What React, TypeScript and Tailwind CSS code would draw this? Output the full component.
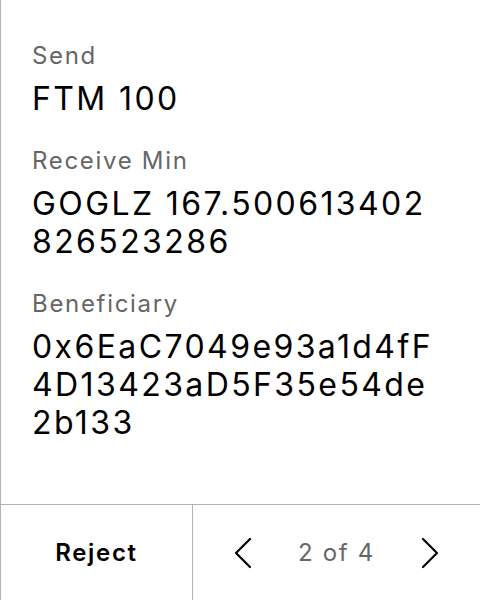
import React from "react";

const fields = [
  { label: "Send", value: "FTM 100" },
  { label: "Receive Min", value: "GOGLZ 167.500613402826523286" },
  { label: "Beneficiary", value: "0x6EaC7049e93a1d4fF4D13423aD5F35e54de2b133" },
];

function Chevron({ dir }: { dir: "left" | "right" }) {
  return (
    <svg width="18" height="32" viewBox="0 0 18 32" fill="none">
      <polyline
        points={dir === "left" ? "16,2 2,16 16,30" : "2,2 16,16 2,30"}
        stroke="#000"
        strokeWidth="2.2"
        strokeLinecap="round"
        strokeLinejoin="round"
      />
    </svg>
  );
}

export default function App() {
  return (
    <div
      className="flex h-[600px] w-[480px] flex-col border-l border-[#b3b3b3] bg-white text-black"
      style={{ fontFamily: "Inter, 'Noto Sans', sans-serif" }}
    >
      <div className="flex flex-1 flex-col gap-[27px] pl-[31px] pt-[40px]">
        {fields.map((f) => (
          <div key={f.label} className="flex flex-col gap-[8px]">
            <p className="text-[24px] leading-[32px] tracking-[0.07em] text-[#666]">{f.label}</p>
            <p className="w-[408px] break-all text-[32px] leading-[38px] tracking-[0.075em]">
              {f.value}
            </p>
          </div>
        ))}
      </div>

      <div className="flex h-[96px] border-t border-[#b3b3b3]">
        <button className="flex w-[192px] items-center justify-center border-r border-[#b3b3b3] text-[24px] font-semibold tracking-[0.07em]">
          Reject
        </button>
        <div className="flex flex-1 items-center justify-center gap-[46px]">
          <Chevron dir="left" />
          <span className="text-[24px] tracking-[0.07em] text-[#666]">2 of 4</span>
          <Chevron dir="right" />
        </div>
      </div>
    </div>
  );
}
